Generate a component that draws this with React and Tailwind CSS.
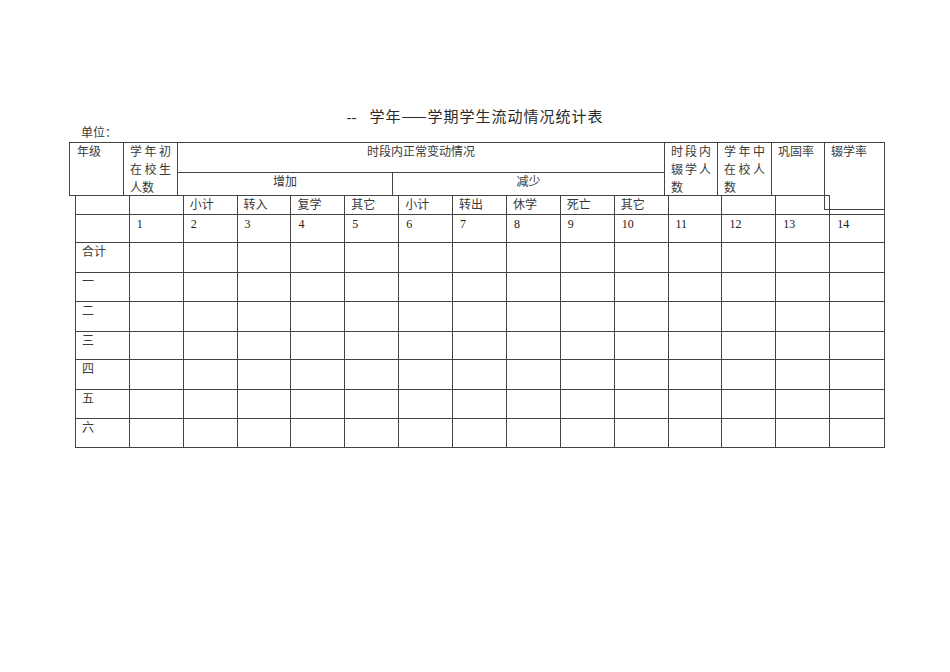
import React from 'react';

const FONT = { fontFamily: '"Liberation Serif", "Noto Sans CJK SC", serif' };
const CJK = { fontFamily: '"Noto Sans CJK SC", sans-serif' };

const subHeads = ['', '', '小计', '转入', '复学', '其它', '小计', '转出', '休学', '死亡', '其它', '', '', '', ''];
const numbers = ['', '1', '2', '3', '4', '5', '6', '7', '8', '9', '10', '11', '12', '13', '14'];
const grades = [
  { name: '合计', h: 'h-[30px]' },
  { name: '一', h: 'h-[29px]' },
  { name: '二', h: 'h-[30px]' },
  { name: '三', h: 'h-[28px]' },
  { name: '四', h: 'h-[30px]' },
  { name: '五', h: 'h-[29px]' },
  { name: '六', h: 'h-[29px]' },
];

const HeadCell = ({ w, children, className = '' }) => (
  <div
    className={`${w} h-[54px] shrink-0 border-l border-t border-b border-[#444] px-[6px] text-justify leading-[18px] ${className}`}
  >
    {children}
  </div>
);

const App = () => {
  return (
    <div className="min-h-[672px] w-[950px] bg-white pt-[106px] text-[12px] text-[#3a3a3a]" style={FONT}>
      <div className="h-[20px] text-center text-[15px] leading-[20px] text-[#2a2a2a]">
        --<span className="ml-[13px] tracking-[1px]">学年<span style={CJK}>——</span>学期学生流动情况统计表</span>
      </div>
      <div className="mb-[2px] ml-[81px] h-[14px] leading-[14px]">单位：</div>

      {/* upper header */}
      <div className="ml-[69px] flex w-[816px] items-start">
        <HeadCell w="w-[54px]" className="pl-[7px]">年级</HeadCell>
        <HeadCell w="w-[54px]">学年初在校生人数</HeadCell>
        <div className="h-[54px] w-[487px] shrink-0 border-l border-t border-b border-[#444] leading-[18px]">
          <div className="h-[30px] border-b border-[#444] text-center">时段内正常变动情况</div>
          <div className="flex h-[22px]">
            <div className="w-[214px] text-center">增加</div>
            <div className="flex-1 border-l border-[#444] text-center">减少</div>
          </div>
        </div>
        <HeadCell w="w-[53px]">时段内辍学人数</HeadCell>
        <HeadCell w="w-[54px]">学年中在校人数</HeadCell>
        <HeadCell w="w-[53px]" className="px-[5px]">巩固率</HeadCell>
        <div className="-mb-[14px] h-[68px] w-[61px] shrink-0 border border-[#444] pl-[6px] leading-[18px]">
          辍学率
        </div>
      </div>

      {/* lower table */}
      <div className="-mt-px ml-[75px] grid w-[810px] grid-cols-15 border-l border-r border-[#444] leading-[18px]">
        {subHeads.map((t, i) => (
          <div
            key={`s${i}`}
            className={`h-[20px] border-b border-[#444] pl-[6px] ${i < 14 ? 'border-r border-t' : ''}`}
          >
            {t}
          </div>
        ))}
        {numbers.map((t, i) => (
          <div
            key={`n${i}`}
            className={`h-[28px] border-b border-[#444] pl-[7px] text-[#222] ${i < 14 ? 'border-r' : ''}`}
          >
            {t}
          </div>
        ))}
        {grades.map((g) =>
          Array.from({ length: 15 }).map((_, i) => (
            <div
              key={`${g.name}${i}`}
              className={`${g.h} border-b border-[#444] pl-[6px] ${i < 14 ? 'border-r' : ''}`}
            >
              {i === 0 ? g.name : ''}
            </div>
          ))
        )}
      </div>
    </div>
  );
};

export default App;
